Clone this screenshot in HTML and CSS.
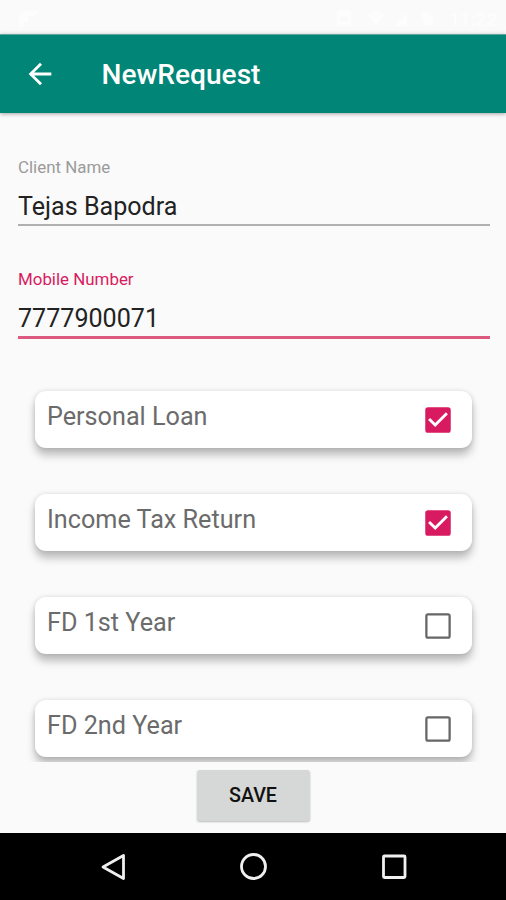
FILE: index.html
```html
<!DOCTYPE html>
<html lang="en">
<head>
<meta charset="utf-8">
<title>NewRequest</title>
<link rel="stylesheet" href="styles.css">
</head>
<body>
<div class="screen">
  <div class="status">
    <svg class="status-left" width="24" height="20" viewBox="0 0 24 20"><path d="M2 18V8q0-6 8-6h12l-5 5h-6v6h-4v5z"/></svg>
    <svg class="status-icons" width="112" height="20" viewBox="0 0 112 20"><path fill-rule="evenodd" d="M0 2h14v15H0zM3 7v6h8V7z"/><path d="M30 6q9-7 18 0l-9 11zM56 17L70 4v13zM84 3h6l6 5v9h-8z"/></svg>
    <span class="clock">11:22</span>
  </div>
  <header class="appbar">
    <svg class="back" width="34" height="34" viewBox="0 0 24 24"><path d="M20 11H7.83l5.59-5.59L12 4l-8 8 8 8 1.41-1.41L7.83 13H20z"/></svg>
    <h1 class="title">NewRequest</h1>
  </header>
  <main class="form">
    <div class="field">
      <div class="label">Client Name</div>
      <div class="value">Tejas Bapodra</div>
    </div>
    <div class="field active">
      <div class="label">Mobile Number</div>
      <div class="value">7777900071</div>
    </div>
    <div class="list">
      <div class="card"><span class="name">Personal Loan</span><svg class="box checked" width="34" height="34" viewBox="0 0 24 24"><path d="M19 3H5a2 2 0 0 0-2 2v14a2 2 0 0 0 2 2h14a2 2 0 0 0 2-2V5a2 2 0 0 0-2-2zm-9 14l-5-5 1.41-1.41L10 14.17l7.59-7.59L19 8z"/></svg></div>
      <div class="card"><span class="name">Income Tax Return</span><svg class="box checked" width="34" height="34" viewBox="0 0 24 24"><path d="M19 3H5a2 2 0 0 0-2 2v14a2 2 0 0 0 2 2h14a2 2 0 0 0 2-2V5a2 2 0 0 0-2-2zm-9 14l-5-5 1.41-1.41L10 14.17l7.59-7.59L19 8z"/></svg></div>
      <div class="card"><span class="name">FD 1st Year</span><svg class="box" width="34" height="34" viewBox="0 0 24 24"><path d="M19.4 4.6v14.8H4.6V4.6h14.8m-.4-1.6H5a2 2 0 0 0-2 2v14a2 2 0 0 0 2 2h14a2 2 0 0 0 2-2V5a2 2 0 0 0-2-2z"/></svg></div>
      <div class="card"><span class="name">FD 2nd Year</span><svg class="box" width="34" height="34" viewBox="0 0 24 24"><path d="M19.4 4.6v14.8H4.6V4.6h14.8m-.4-1.6H5a2 2 0 0 0-2 2v14a2 2 0 0 0 2 2h14a2 2 0 0 0 2-2V5a2 2 0 0 0-2-2z"/></svg></div>
    </div>
  </main>
  <footer class="actions"><button class="save">SAVE</button></footer>
  <nav class="navbar">
    <svg width="34" height="34" viewBox="0 0 34 34"><path d="M26.5 5.5v23L6 17z"/></svg>
    <svg width="34" height="34" viewBox="0 0 34 34"><circle cx="16.5" cy="16.5" r="12"/></svg>
    <svg width="34" height="34" viewBox="0 0 34 34"><rect x="6.5" y="6" width="21.5" height="21.5" rx="1"/></svg>
  </nav>
</div>
</body>
</html>
```
FILE: styles.css
```css
* { box-sizing: border-box; }
body { margin: 0; background: #fafafa; font-family: Roboto, sans-serif; }
.screen { width: 506px; height: 900px; display: flex; flex-direction: column; overflow: hidden; }
.status { height: 34px; flex: none; display: flex; align-items: center; padding: 4px 9px 0 17px; color: #fdfdfd; fill: #fdfdfd; }
.status-icons { margin-left: auto; }
.clock { font-size: 19px; font-weight: 500; width: 48px; text-align: right; }
.appbar { height: 79px; flex: none; display: flex; align-items: center; background: #008577; border-top: 1px solid #5ba79e; padding-left: 23px; box-shadow: 0 1px 4px rgba(0,0,0,.35); z-index: 1; }
.back { fill: #fff; }
.title { margin: 2px 0 0 44.5px; color: #fff; font-size: 28.1px; line-height: 34px; font-weight: 500; }
.form { height: 649px; flex: none; padding: 42px 16px 0 17px; overflow: hidden; }
.field { height: 112px; padding-left: 1px; }
.label { color: #9b9b9b; font-size: 16.9px; line-height: 24px; }
.value { margin-top: 13px; font-size: 25.1px; line-height: 30px; height: 34px; border-bottom: 2px solid #b0b0b0; color: #222; }
.active .label { color: #d81b60; }
.active .value { height: 35px; border-bottom: 3px solid #dc5a7f; }
.list { display: flex; flex-direction: column; gap: 46px; padding: 12px 18px 0 18px; }
.card { height: 57px; flex: none; border-radius: 11px; background: #fff; padding: 11px 17px 0 12px; display: flex; justify-content: space-between; box-shadow: 0 7px 9px rgba(0,0,0,.25), 0 0 5px rgba(0,0,0,.12); }
.name { font-size: 25.2px; line-height: 30px; color: #6b6b6b; }
.box { fill: #666; margin-top: 1px; }
.checked { fill: #d81b60; margin-top: 0.5px; }
.actions { height: 71px; flex: none; display: flex; justify-content: center; padding-top: 8px; }
.save { width: 113px; height: 51px; border: 0; border-radius: 3px; background: #d6d7d7; box-shadow: 0 1px 2px rgba(0,0,0,.25); font: 500 19.7px/50px Roboto, sans-serif; color: #111; padding: 0; }
.navbar { height: 67px; flex: none; background: #000; display: flex; justify-content: space-between; padding: 17px 95px 0 97px; fill: none; stroke: #f0f0f0; stroke-width: 2.8; stroke-linejoin: round; }
```
